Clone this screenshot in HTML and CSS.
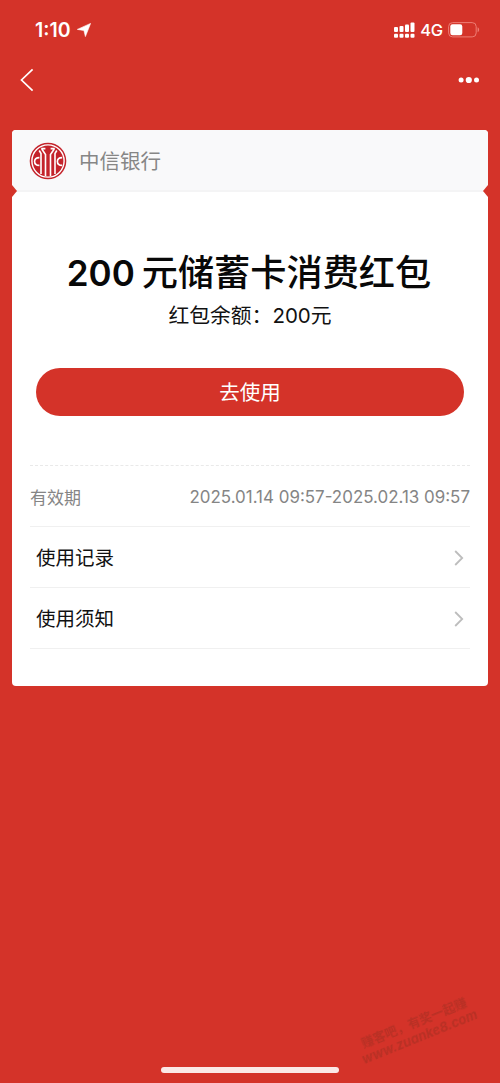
FILE: index.html
```html
<!DOCTYPE html>
<html lang="zh-CN">
<head>
<meta charset="utf-8">
<title>红包详情</title>
<link rel="stylesheet" href="styles.css">
</head>
<body>
<div class="screen">
  <header class="status">
    <div class="clock"><span>1:10</span>
      <svg class="locate" viewBox="0 0 14 14"><path d="M13.6.4 8.4 13.6 6.9 7.5.3 6.4Z" fill="#fff" stroke="#fff" stroke-width=".6" stroke-linejoin="round"/></svg>
    </div>
    <div class="signals">
      <svg class="bars" viewBox="0 0 21 17"><g fill="#fff"><rect x="0" y="5" width="4" height="5" rx="1"/><rect x="5.5" y="4" width="4" height="6" rx="1"/><rect x="11" y="2.5" width="4" height="7.5" rx="1"/><rect x="16.5" y="0.5" width="4" height="9.5" rx="1"/><rect x="0" y="11.8" width="4" height="4" rx="1"/><rect x="5.5" y="11.8" width="4" height="4" rx="1"/><rect x="11" y="11.8" width="4" height="4" rx="1"/><rect x="16.5" y="11.8" width="4" height="4" rx="1"/></g></svg>
      <span class="network">4G</span>
      <svg class="battery" viewBox="0 0 32 16"><rect x=".6" y=".6" width="27.6" height="14.3" rx="4" fill="none" stroke="#ee7d74"/><rect x="2.3" y="2.3" width="12" height="11" rx="2.2" fill="#fff"/><path d="M29.6 5.3c2 .9 2 4.1 0 5Z" fill="#ee7d74"/></svg>
    </div>
  </header>
  <nav class="nav">
    <svg class="back" viewBox="0 0 14 24"><path d="M12.6 1.3 1.5 12l11.1 10.7" fill="none" stroke="#fff" stroke-width="1.7"/></svg>
    <svg class="more" viewBox="0 0 22 8"><g fill="#fff"><circle cx="3.1" cy="4" r="2.5"/><circle cx="10.8" cy="4" r="3.1"/><circle cx="18.5" cy="4" r="2.5"/></g></svg>
  </nav>
  <main class="card">
    <div class="bank">
      <svg class="logo" viewBox="0 0 38 38">
        <circle cx="19" cy="19" r="18.3" fill="#c4232b"/>
        <circle cx="19" cy="19" r="16.1" fill="none" stroke="#fff" stroke-width="1.4"/>
        <g fill="none" stroke="#fff" stroke-width="1.6">
          <path d="M10.4 15.6c-6.4 0-6.4 7.8 0 7.8M33.2 15.6c-6.4 0-6.4 7.8 0 7.8"/>
          <path d="M12 32V11.5L10.2 8.5M16.5 34V12.5L12.8 7M21.5 34V12.5L25.2 7M26 32V11.5l1.8-3M12.2 6.6h4.2M21.6 6.6h4.2"/>
        </g>
      </svg>
      <span>中信银行</span>
    </div>
    <div class="divider"></div>
    <section class="packet">
      <h1 class="title"><span class="amount">200</span><span>元储蓄卡消费红包</span></h1>
      <p class="balance">红包余额：<span class="figure">200</span>元</p>
      <button class="use">去使用</button>
    </section>
    <section class="details">
      <div class="row validity"><span>有效期</span><span class="dates">2025.01.14 09:57-2025.02.13 09:57</span></div>
      <div class="row link"><span>使用记录</span><svg class="chevron" viewBox="0 0 10 16"><path d="m1.2 1 7 7-7 7" fill="none" stroke="#bdbdbd" stroke-width="1.8"/></svg></div>
      <div class="row link"><span>使用须知</span><svg class="chevron" viewBox="0 0 10 16"><path d="m1.2 1 7 7-7 7" fill="none" stroke="#bdbdbd" stroke-width="1.8"/></svg></div>
    </section>
  </main>
  <div class="watermark"><div>赚客吧，有奖一起赚</div><div class="site">www.zuanke8.com</div></div>
  <div class="home"></div>
</div>
</body>
</html>
```
FILE: styles.css
```css
* { box-sizing: border-box; }
body { margin: 0; font-family: Inter, "Noto Sans CJK SC", sans-serif; }
.screen { position: relative; display: flex; flex-direction: column; width: 500px; height: 1083px; overflow: hidden; background: #d43329; }
.status { display: flex; justify-content: space-between; height: 60px; padding: 0 20px 0 35px; color: #fff; }
.clock, .signals { display: flex; align-items: center; }
.clock { gap: 5px; font-size: 19.5px; font-weight: 600; letter-spacing: 0; }
.clock span { width: 37px; }
.locate { width: 14px; height: 14px; }
.bars { width: 21px; height: 17px; }
.network { margin-left: 5px; font-size: 16.5px; font-weight: 500; letter-spacing: -.2px; }
.battery { width: 32px; height: 16px; margin-left: 5px; }
.nav { display: flex; align-items: center; justify-content: space-between; height: 40px; padding: 0 20px; }
.back { width: 14px; height: 24px; }
.more { width: 22px; height: 8px; }
.card { height: 556px; margin: 30px 12px 0; border-radius: 4px; background: #fff; }
.bank { display: flex; align-items: center; gap: 12px; height: 60px; padding: 1px 0 0 17px; border-radius: 4px 4px 0 0; background: #f9f9fa; color: #868686; font-size: 20.5px; }
.bank span { margin-top: -1px; }
.logo { width: 38px; height: 38px; }
.divider { display: flex; justify-content: space-between; height: 2px; background: #f4f4f5; }
.divider::before, .divider::after { content: ""; width: 5px; height: 12px; margin-top: -5px; background: #d43329; }
.divider::before { clip-path: polygon(0 0, 100% 50%, 0 100%); }
.divider::after { clip-path: polygon(100% 0, 0 50%, 100% 100%); }
.packet { display: flex; flex-direction: column; align-items: center; height: 272px; padding-top: 55px; }
.title { display: flex; align-items: center; gap: 7px; height: 52px; margin: 0 2px 0 0; color: #080808; font-size: 36.2px; font-weight: 500; line-height: 52px; white-space: nowrap; }
.amount { font-size: 35px; font-weight: 600; }
.balance { height: 32px; margin: 1px 0 0; color: #111; font-size: 20.8px; line-height: 32px; }
.figure { font-size: 20.5px; }
.use { width: 428px; height: 48px; margin-top: 36px; padding: 0; border: 0; border-radius: 24px; background: #d43329; color: #fff; font: 20.5px/49px Inter, "Noto Sans CJK SC", sans-serif; }
.details { margin: 1px 18px 0; border-top: 1px dashed #e9e9e9; }
.row { display: flex; align-items: center; justify-content: space-between; height: 61px; border-bottom: 1px solid #f0f0f0; }
.validity { color: #858585; font-size: 17px; }
.dates { padding-top: 2px; font-size: 16.95px; }
.link { padding: 0 6px; color: #111; font-size: 19.5px; }
.link span { margin-top: -1px; }
.chevron { width: 10px; height: 16px; margin-top: 2px; }
.watermark { position: absolute; left: 352px; top: 1015px; width: 130px; transform: rotate(-22deg); color: rgba(130, 45, 30, .34); font-size: 12.5px; font-weight: 700; line-height: 15px; text-align: center; white-space: nowrap; filter: blur(.7px); }
.site { font-size: 13px; font-style: italic; }
.home { position: absolute; left: 161px; bottom: 10px; width: 178px; height: 6px; border-radius: 3px; background: #fbe9e7; }
```
